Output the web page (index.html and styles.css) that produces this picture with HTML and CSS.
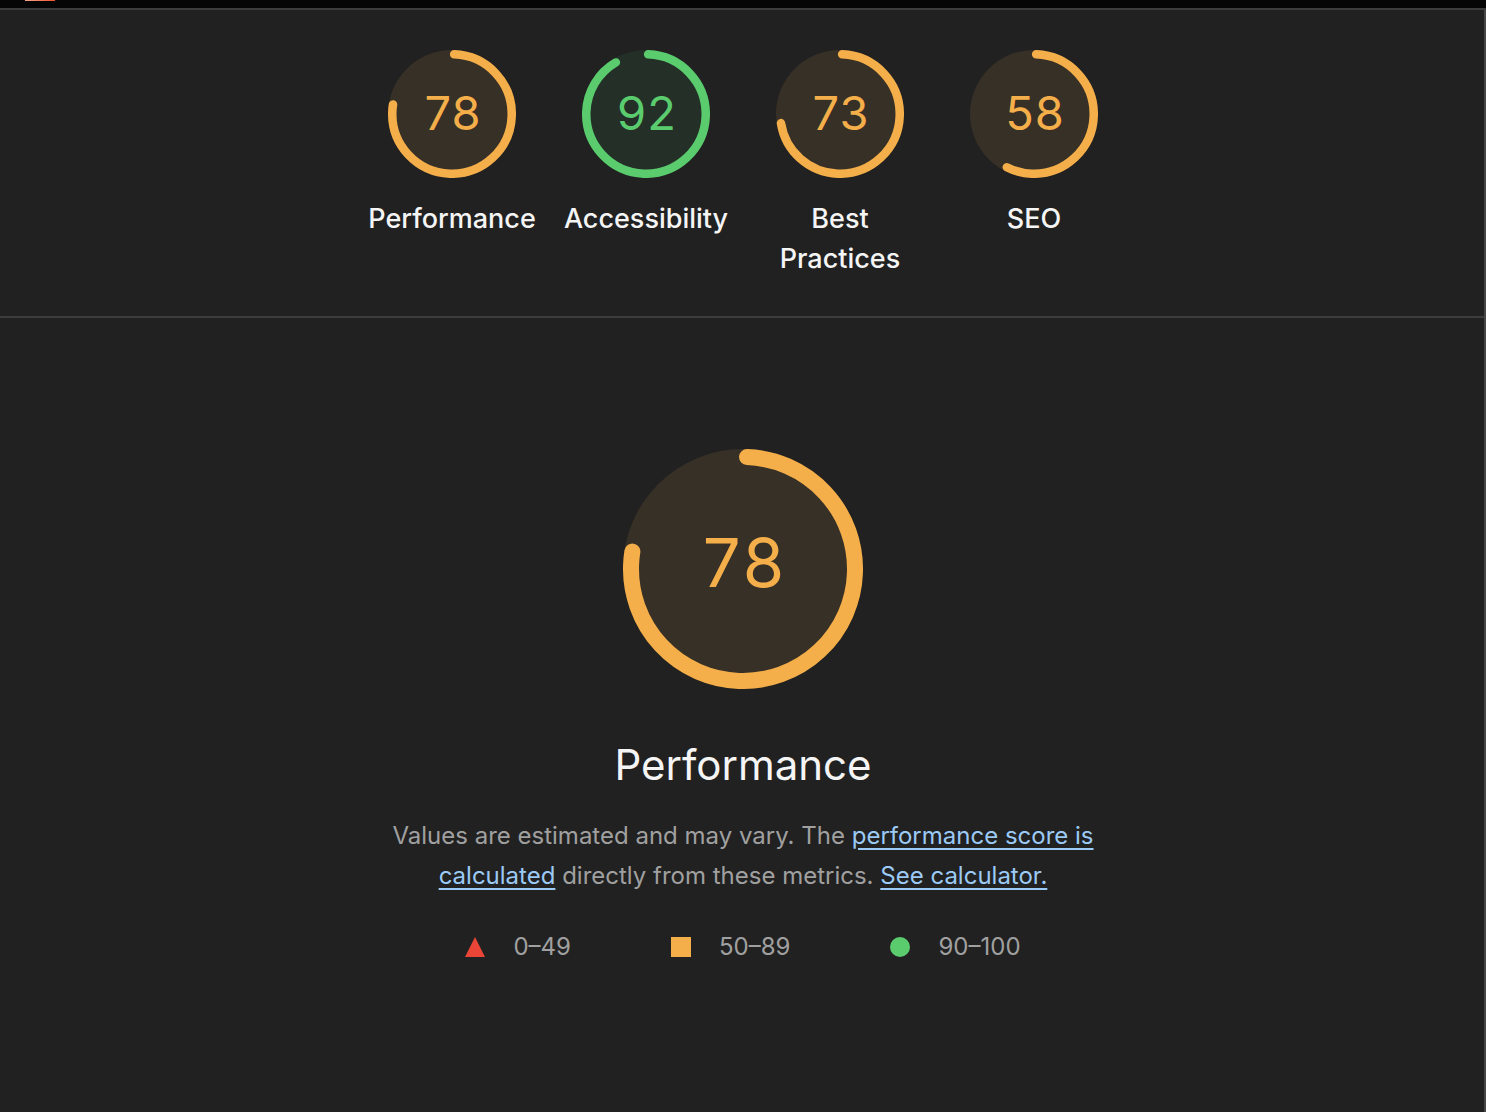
FILE: index.html
```html
<!DOCTYPE html>
<html>
<head>
    <meta charset="utf-8">
    <title>Lighthouse Report</title>
    <link rel="stylesheet" href="styles.css">
</head>
<body>
    <div class="topbar"><span class="topbar-mark"></span></div>
    <div class="report">
        <section class="scores">
            <a class="score-item">
                <div class="gauge gauge-average">
                    <svg viewBox="0 0 120 120">
                        <circle class="gauge-base" cx="60" cy="60" r="60"></circle>
                        <circle class="gauge-arc" cx="60" cy="60" r="56" stroke-dasharray="270.45 351.86" transform="rotate(-87.95 60 60)"></circle>
                    </svg>
                    <div class="gauge-value">78</div>
                </div>
                <div class="score-label">Performance</div>
            </a>
            <a class="score-item">
                <div class="gauge gauge-pass">
                    <svg viewBox="0 0 120 120">
                        <circle class="gauge-base" cx="60" cy="60" r="60"></circle>
                        <circle class="gauge-arc" cx="60" cy="60" r="56" stroke-dasharray="319.71 351.86" transform="rotate(-87.95 60 60)"></circle>
                    </svg>
                    <div class="gauge-value">92</div>
                </div>
                <div class="score-label">Accessibility</div>
            </a>
            <a class="score-item">
                <div class="gauge gauge-average">
                    <svg viewBox="0 0 120 120">
                        <circle class="gauge-base" cx="60" cy="60" r="60"></circle>
                        <circle class="gauge-arc" cx="60" cy="60" r="56" stroke-dasharray="252.86 351.86" transform="rotate(-87.95 60 60)"></circle>
                    </svg>
                    <div class="gauge-value">73</div>
                </div>
                <div class="score-label">Best Practices</div>
            </a>
            <a class="score-item">
                <div class="gauge gauge-average">
                    <svg viewBox="0 0 120 120">
                        <circle class="gauge-base" cx="60" cy="60" r="60"></circle>
                        <circle class="gauge-arc" cx="60" cy="60" r="56" stroke-dasharray="200.08 351.86" transform="rotate(-87.95 60 60)"></circle>
                    </svg>
                    <div class="gauge-value">58</div>
                </div>
                <div class="score-label">SEO</div>
            </a>
        </section>

        <section class="category">
            <div class="gauge gauge-big gauge-average">
                <svg viewBox="0 0 120 120">
                    <circle class="gauge-base" cx="60" cy="60" r="60"></circle>
                    <circle class="gauge-arc" cx="60" cy="60" r="56" stroke-dasharray="270.45 351.86" transform="rotate(-87.95 60 60)"></circle>
                </svg>
                <div class="gauge-value">78</div>
            </div>
            <div class="category-title">Performance</div>
            <div class="category-description">
                Values are estimated and may vary. The <a href="#">performance score is calculated</a> directly from these metrics. <a href="#">See calculator.</a>
            </div>
            <div class="legend">
                <span class="legend-item"><span class="legend-icon legend-fail"></span>0–49</span>
                <span class="legend-item"><span class="legend-icon legend-average"></span>50–89</span>
                <span class="legend-item"><span class="legend-icon legend-pass"></span>90–100</span>
            </div>
        </section>
    </div>
</body>
</html>
```

FILE: styles.css
```css
html, body {
    margin: 0;
    padding: 0;
}
body {
    font-family: Inter, "Noto Sans", sans-serif;
    background: #212121;
    color: #f5f5f5;
    height: 1112px;
    overflow: hidden;
}
.topbar {
    height: 8px;
    background: #050505;
    border-bottom: 2px solid #3c3c3c;
}
.topbar-mark {
    display: block;
    margin-left: 25px;
    width: 30px;
    height: 1px;
    background: linear-gradient(90deg, #f7a58b, #f0522f);
}
.report {
    border-right: 2px solid #474747;
    height: 1102px;
    padding-left: 2px;
}
/* score overview */
.scores {
    display: flex;
    justify-content: center;
    gap: 14px;
    padding-top: 40px;
    height: 266px;
    border-bottom: 2px solid #3c3c3c;
    margin-left: -2px;
    padding-left: 2px;
}
.score-item {
    width: 180px;
    display: flex;
    flex-direction: column;
    align-items: center;
}
.score-label {
    margin-top: 21px;
    font-size: 27px;
    font-weight: 500;
    line-height: 40px;
    text-align: center;
    color: #f5f5f5;
}
/* gauges */
.gauge {
    position: relative;
    width: 128px;
    height: 128px;
}
.gauge svg {
    display: block;
    width: 100%;
    height: 100%;
}
.gauge-arc {
    fill: none;
    stroke-width: 8;
    stroke-linecap: round;
}
.gauge-average .gauge-base { fill: #373026; }
.gauge-average .gauge-arc { stroke: #f4ae4a; }
.gauge-average .gauge-value { color: #f4ae4a; }
.gauge-pass .gauge-base { fill: #242f28; }
.gauge-pass .gauge-arc { stroke: #5acc6e; }
.gauge-pass .gauge-value { color: #5acc6e; }
.gauge-value {
    position: absolute;
    inset: 0;
    display: flex;
    align-items: center;
    justify-content: center;
    font-size: 47px;
    letter-spacing: 1px;
    padding-left: 2px;
    padding-bottom: 4px;
}
.gauge-big {
    width: 240px;
    height: 240px;
    margin-top: 2px;
}
.gauge-big .gauge-value {
    font-size: 67px;
    letter-spacing: 3px;
    padding-left: 4px;
    padding-bottom: 14px;
}
/* performance category */
.category {
    display: flex;
    flex-direction: column;
    align-items: center;
    padding-top: 129px;
}
.category-title {
    margin-top: 52px;
    font-size: 42px;
    line-height: 48px;
    color: #f5f5f5;
}
.category-description {
    margin-top: 27px;
    max-width: 710px;
    font-size: 24px;
    line-height: 40px;
    text-align: center;
    color: #a0a0a0;
}
.category-description a {
    color: #9ccaf6;
    text-decoration: underline;
    text-underline-offset: 4px;
}
.legend {
    display: flex;
    gap: 100px;
    margin-top: 31px;
    font-size: 24px;
    line-height: 40px;
    color: #a0a0a0;
}
.legend-item {
    display: flex;
    align-items: center;
    gap: 28px;
}
.legend-icon {
    display: inline-block;
    width: 20px;
    height: 20px;
}
.legend-fail {
    width: 0;
    height: 0;
    border-left: 10px solid transparent;
    border-right: 10px solid transparent;
    border-bottom: 20px solid #eb4537;
}
.legend-average {
    background: #f4ae4a;
}
.legend-pass {
    border-radius: 50%;
    background: #5acc6e;
}
```
